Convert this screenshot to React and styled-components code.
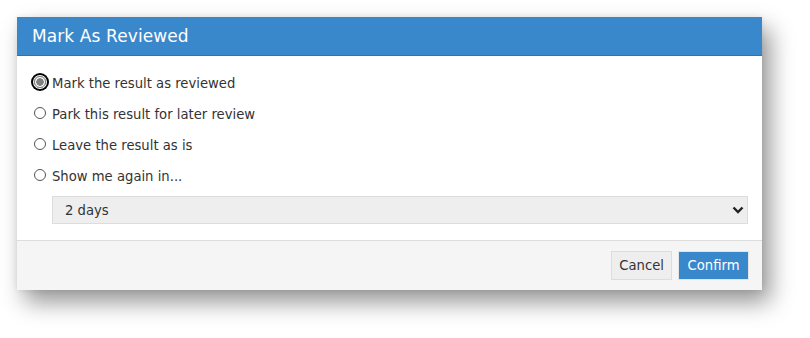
import React, { useState } from "react";
import styled, { createGlobalStyle } from "styled-components";

const GlobalStyle = createGlobalStyle`
  html, body {
    margin: 0;
    padding: 0;
    background: #ffffff;
  }
  body {
    font-family: "DejaVu Sans", Verdana, sans-serif;
    font-size: 13px;
    color: #333333;
  }
`;

const Page = styled.div`
  padding: 17px 48px 40px 17px;
`;

const Dialog = styled.div`
  width: 745px;
  background: #ffffff;
  box-shadow: 8px 12px 22px rgba(0, 0, 0, 0.42), 0 0 6px rgba(0, 0, 0, 0.08);
`;

const Header = styled.div`
  height: 38px;
  display: flex;
  align-items: center;
  padding: 0 15px;
  background: #3a88cc;
  border-bottom: 1px solid #2f74b2;
  color: #ffffff;
  font-size: 17px;
  letter-spacing: 0.1px;
`;

const Body = styled.div`
  padding: 12px 14px 16px 15px;
`;

const Option = styled.label`
  display: flex;
  align-items: center;
  height: 31px;
  font-size: 13.2px;
  cursor: pointer;
`;

const Radio = styled.input.attrs({ type: "radio" })`
  appearance: none;
  width: 12px;
  height: 12px;
  margin: 0 6px 0 2px;
  border: 1px solid #555555;
  border-radius: 50%;
  background: #ffffff;
  flex-shrink: 0;
  position: relative;
  top: -2px;

  &:checked {
    border-color: #777777;
    background: radial-gradient(circle, #808080 0 3.5px, #ffffff 4px);
    box-shadow: 0 0 0 1px #ffffff, 0 0 0 3px #000000;
  }

  &:focus {
    outline: none;
  }
`;

const SelectWrap = styled.div`
  position: relative;
  margin: 4px 0 0 20px;
`;

const Select = styled.select`
  appearance: none;
  width: 100%;
  height: 28px;
  padding: 0 30px 0 12px;
  border: 1px solid #dddddd;
  border-radius: 0;
  background: #eeeeee;
  color: #333333;
  font-family: inherit;
  font-size: 13.2px;
  outline: none;
`;

const Chevron = styled.svg`
  position: absolute;
  right: 4px;
  top: 10px;
  pointer-events: none;
`;

const Footer = styled.div`
  display: flex;
  justify-content: flex-end;
  gap: 6px;
  padding: 10px 13px 10px 15px;
  background: #f5f5f5;
  border-top: 1px solid #dddddd;
`;

const Button = styled.button`
  height: 29px;
  padding: 0 ${(p) => (p.primary ? "8.5px" : "7px")};
  font-family: inherit;
  font-size: 13.2px;
  border: 1px solid ${(p) => (p.primary ? "#e4e4e4" : "#dddddd")};
  background: ${(p) => (p.primary ? "#3a88cc" : "#eeeeee")};
  color: ${(p) => (p.primary ? "#ffffff" : "#333333")};
  cursor: pointer;
`;

const options = [
  "Mark the result as reviewed",
  "Park this result for later review",
  "Leave the result as is",
  "Show me again in...",
];

export default function App() {
  const [choice, setChoice] = useState(0);
  const [delay, setDelay] = useState("2 days");

  return (
    <>
      <GlobalStyle />
      <Page>
        <Dialog>
          <Header>Mark As Reviewed</Header>
          <Body>
            {options.map((text, i) => (
              <Option key={text}>
                <Radio
                  name="review"
                  checked={choice === i}
                  onChange={() => setChoice(i)}
                />
                {text}
              </Option>
            ))}
            <SelectWrap>
              <Select value={delay} onChange={(e) => setDelay(e.target.value)}>
                <option>1 day</option>
                <option>2 days</option>
                <option>1 week</option>
                <option>1 month</option>
              </Select>
              <Chevron width="12" height="8" viewBox="0 0 12 8">
                <path
                  d="M1.5 1.5 L6 6 L10.5 1.5"
                  fill="none"
                  stroke="#222222"
                  strokeWidth="2.4"
                />
              </Chevron>
            </SelectWrap>
          </Body>
          <Footer>
            <Button>Cancel</Button>
            <Button primary>Confirm</Button>
          </Footer>
        </Dialog>
      </Page>
    </>
  );
}
